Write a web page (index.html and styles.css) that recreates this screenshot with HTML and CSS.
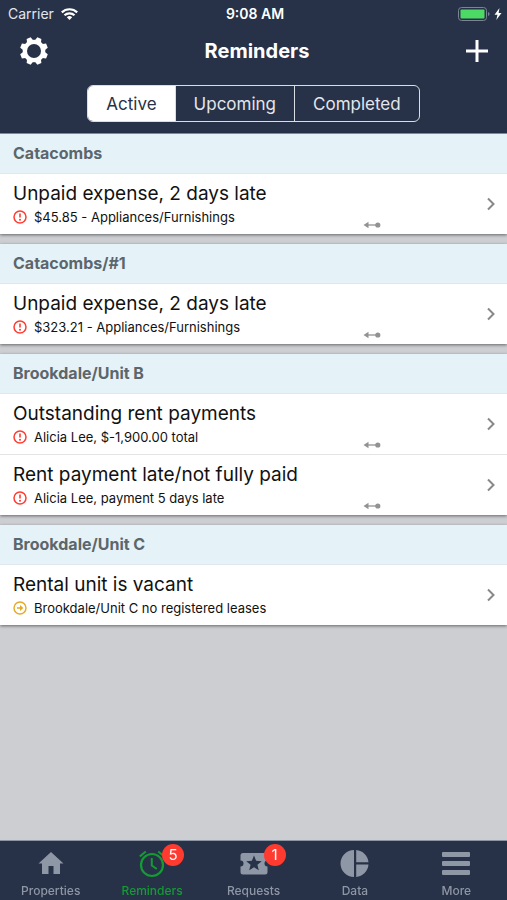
FILE: index.html
```html
<!DOCTYPE html>
<html lang="en">
<head>
    <meta charset="UTF-8">
    <meta name="viewport" content="width=device-width, initial-scale=1.0">
    <title>Reminders</title>
    <link rel="stylesheet" href="styles.css">
</head>
<body>
    <!-- Shared icons -->
    <svg class="icon-defs" aria-hidden="true">
        <symbol id="alert" viewBox="0 0 14 14">
            <circle cx="7" cy="7" r="6" fill="none" stroke="currentColor" stroke-width="1.5"/>
            <path d="M7 3.6v4" stroke="currentColor" stroke-width="1.6"/>
            <circle cx="7" cy="9.7" r="1" fill="currentColor"/>
        </symbol>
        <symbol id="vacant" viewBox="0 0 14 14">
            <circle cx="7" cy="7" r="6" fill="none" stroke="currentColor" stroke-width="1.4"/>
            <path d="M4 6.2h3V4l3.4 3L7 10V7.8H4z" fill="currentColor"/>
        </symbol>
        <symbol id="swipe" viewBox="0 0 18 8">
            <path d="M4 4h11" stroke="currentColor" stroke-width="1.3"/>
            <path d="M0.5 4L5.5 0.8v6.4z" fill="currentColor"/>
            <circle cx="14.8" cy="4" r="2.6" fill="currentColor"/>
        </symbol>
        <symbol id="chevron" viewBox="0 0 8 14">
            <path d="M1 1.5L6.5 7L1 12.5" fill="none" stroke="currentColor" stroke-width="2"/>
        </symbol>
    </svg>

    <header class="header">
        <div class="status-bar">
            <div class="carrier">
                <span>Carrier</span>
                <svg class="wifi" viewBox="0 0 17 12" fill="none" stroke="currentColor" stroke-width="2.2">
                    <path d="M0.8 4.4a11 11 0 0 1 15.4 0"/>
                    <path d="M3.5 7.3a7.2 7.2 0 0 1 10 0"/>
                    <path d="M8.5 12L5.8 9.2a3.9 3.9 0 0 1 5.4 0z" fill="currentColor" stroke="none"/>
                </svg>
            </div>
            <div class="time">9:08 AM</div>
            <div class="power">
                <svg class="battery" viewBox="0 0 32 14">
                    <rect x="0.5" y="0.5" width="28" height="13" rx="3" fill="none" stroke="#7b8494"/>
                    <rect x="2.5" y="2.5" width="24" height="9" rx="1" fill="#4cd964"/>
                    <path d="M30 5v4q1.6-.6 1.6-2t-1.6-2z" fill="#7b8494"/>
                </svg>
                <svg class="bolt" viewBox="0 0 8 12"><path d="M5.5 0L0.5 6.8h3L2.3 12L7.5 4.9H4.6z" fill="currentColor"/></svg>
            </div>
        </div>
        <div class="nav-bar">
            <button class="nav-button" aria-label="Settings">
                <svg class="gear" viewBox="-14 -14 28 28">
                    <g fill="currentColor">
                        <g transform="rotate(22.5)">
                            <path id="tooth" d="M-3.6 -9L-2.2 -14H2.2L3.6 -9V9L2.2 14H-2.2L-3.6 9z"/>
                            <use href="#tooth" transform="rotate(45)"/>
                            <use href="#tooth" transform="rotate(90)"/>
                            <use href="#tooth" transform="rotate(135)"/>
                        </g>
                        <circle r="11.3"/>
                    </g>
                    <circle class="gear-hole" r="7"/>
                </svg>
            </button>
            <h1>Reminders</h1>
            <button class="nav-button" aria-label="Add reminder">
                <svg class="plus" viewBox="0 0 22 22"><path d="M11 0v22M0 11h22" stroke="currentColor" stroke-width="3"/></svg>
            </button>
        </div>
        <div class="segments">
            <button class="segment active">Active</button>
            <button class="segment">Upcoming</button>
            <button class="segment">Completed</button>
        </div>
    </header>

    <main class="list">
        <section class="group">
            <h2>Catacombs</h2>
            <a class="row" href="#">
                <div class="details">
                    <div class="title">Unpaid expense, 2 days late</div>
                    <div class="note"><svg class="note-icon"><use href="#alert"/></svg>$45.85 - Appliances/Furnishings</div>
                </div>
                <svg class="swipe"><use href="#swipe"/></svg>
                <svg class="chevron"><use href="#chevron"/></svg>
            </a>
        </section>

        <section class="group">
            <h2>Catacombs/#1</h2>
            <a class="row" href="#">
                <div class="details">
                    <div class="title">Unpaid expense, 2 days late</div>
                    <div class="note"><svg class="note-icon"><use href="#alert"/></svg>$323.21 - Appliances/Furnishings</div>
                </div>
                <svg class="swipe"><use href="#swipe"/></svg>
                <svg class="chevron"><use href="#chevron"/></svg>
            </a>
        </section>

        <section class="group">
            <h2>Brookdale/Unit B</h2>
            <a class="row" href="#">
                <div class="details">
                    <div class="title">Outstanding rent payments</div>
                    <div class="note"><svg class="note-icon"><use href="#alert"/></svg>Alicia Lee, $-1,900.00 total</div>
                </div>
                <svg class="swipe"><use href="#swipe"/></svg>
                <svg class="chevron"><use href="#chevron"/></svg>
            </a>
            <a class="row" href="#">
                <div class="details">
                    <div class="title">Rent payment late/not fully paid</div>
                    <div class="note"><svg class="note-icon"><use href="#alert"/></svg>Alicia Lee, payment 5 days late</div>
                </div>
                <svg class="swipe"><use href="#swipe"/></svg>
                <svg class="chevron"><use href="#chevron"/></svg>
            </a>
        </section>

        <section class="group">
            <h2>Brookdale/Unit C</h2>
            <a class="row" href="#">
                <div class="details">
                    <div class="title">Rental unit is vacant</div>
                    <div class="note"><svg class="note-icon vacant"><use href="#vacant"/></svg>Brookdale/Unit C no registered leases</div>
                </div>
                <svg class="chevron"><use href="#chevron"/></svg>
            </a>
        </section>
    </main>

    <nav class="tab-bar">
        <a class="tab" href="#">
            <svg class="tab-icon" viewBox="0 0 30 30"><path d="M15 4L2.5 15.5H6V26h6.500v-8h5v8H24V15.5h3.5z" fill="currentColor"/></svg>
            Properties
        </a>
        <a class="tab current" href="#">
            <span class="tab-picture">
                <svg class="tab-icon" viewBox="0 0 30 30" fill="none" stroke="currentColor" stroke-width="2.2">
                    <circle cx="15" cy="17" r="11"/>
                    <path d="M2.8 8.5L8.8 3.5M27.2 8.5L21.2 3.5"/>
                    <path d="M14.8 10v7.5l5 3.5" stroke-width="2"/>
                </svg>
                <span class="badge">5</span>
            </span>
            Reminders
        </a>
        <a class="tab" href="#">
            <span class="tab-picture">
                <svg class="tab-icon" viewBox="0 0 30 30">
                    <path fill="currentColor" fill-rule="evenodd" d="M4 5h22a2.5 2.5 0 0 1 2.5 2.5v5a3 3 0 0 0 0 6V24a2.5 2.5 0 0 1-2.5 2.5H4A2.5 2.5 0 0 1 1.5 24v-5.5a3 3 0 0 0 0-6v-5A2.5 2.5 0 0 1 4 5zM15 7.5l-2.1 5.3-5.7.4 4.4 3.6-1.4 5.5 4.8-3 4.8 3-1.4-5.5 4.4-3.6-5.7-.4z"/>
                </svg>
                <span class="badge">1</span>
            </span>
            Requests
        </a>
        <a class="tab" href="#">
            <svg class="tab-icon" viewBox="0 0 30 30" fill="currentColor">
                <path d="M14 2v27A13.5 13.5 0 0 1 14 2zM16.2 2A13.5 13.5 0 0 1 28.5 14.3H16.2zM16.2 16.6h12.3A13.5 13.5 0 0 1 16.2 29z"/>
            </svg>
            Data
        </a>
        <a class="tab" href="#">
            <svg class="tab-icon" viewBox="0 0 30 30" fill="currentColor">
                <rect x="1" y="4" width="28" height="5" rx="1"/>
                <rect x="1" y="13" width="28" height="5" rx="1"/>
                <rect x="1" y="22" width="28" height="5" rx="1"/>
            </svg>
            More
        </a>
    </nav>
</body>
</html>
```
FILE: styles.css
```css
:root {
    --bar-color: #273147;
    --page-color: #cdced2;
    --group-color: #e5f2f8;
    --tab-color: #8e97a6;
    --current-color: #159a35;
    --alert-color: #ff3b30;
}
* {
    box-sizing: border-box;
}
body {
    font-family: Inter, Roboto, sans-serif;
    display: flex;
    flex-direction: column;
    min-height: 100vh;
    margin: 0;
    background-color: var(--page-color);
    color: #111;
}
a {
    color: inherit;
    text-decoration: none;
}
button {
    font-family: inherit;
    background: none;
    border: none;
    color: white;
    cursor: pointer;
}
svg {
    display: block;
    flex: none;
}
.icon-defs {
    position: absolute;
    width: 0;
    height: 0;
}

/* Header */
.header {
    background-color: var(--bar-color);
    color: white;
    padding-bottom: 11px;
    border-bottom: 1px solid #8b95a3;
}
.status-bar {
    display: grid;
    grid-template-columns: 1fr auto 1fr;
    align-items: center;
    height: 27px;
    padding: 0 5px 0 8px;
    font-size: 14px;
}
.carrier, .power {
    display: flex;
    align-items: center;
    gap: 7px;
    color: #e3e6ec;
}
.wifi {
    width: 17px;
    height: 12px;
    color: white;
}
.time {
    font-weight: 600;
}
.power {
    justify-content: flex-end;
    gap: 4px;
    color: white;
}
.battery {
    width: 32px;
    height: 14px;
}
.bolt {
    width: 8px;
    height: 12px;
}
.nav-bar {
    display: flex;
    align-items: center;
    justify-content: space-between;
    height: 47px;
    padding: 0 19px 0 20px;
}
.nav-button {
    padding: 0;
}
.gear {
    width: 28px;
    height: 28px;
}
.gear-hole {
    fill: var(--bar-color);
}
.plus {
    width: 22px;
    height: 22px;
}
h1 {
    margin: 0;
    font-size: 20px;
    font-weight: 700;
}
.segments {
    display: flex;
    width: fit-content;
    margin: 11px auto 0;
    border: 1px solid #d9dde4;
    border-radius: 6px;
    overflow: hidden;
}
.segment {
    height: 35px;
    padding: 0 18px;
    font-size: 17px;
    color: #e3e6ec;
}
.segment + .segment {
    border-left: 1px solid #d9dde4;
}
.segment.active {
    background-color: white;
    color: var(--bar-color);
}

/* Reminder list */
.list {
    flex: 1;
}
.group {
    margin-bottom: 10px;
    background-color: white;
    box-shadow: 0 1px 3px rgba(0, 0, 0, 0.5);
}
h2 {
    margin: 0;
    padding: 0 13px;
    background-color: var(--group-color);
    border-bottom: 1px solid #dfe8ec;
    color: #5c666b;
    font-size: 16px;
    line-height: 39px;
    font-weight: 700;
}
.row {
    display: flex;
    align-items: center;
    height: 60px;
    padding: 0 12px 0 13px;
}
.row + .row {
    height: 61px;
    border-top: 1px solid #e4e4e6;
}
.details {
    flex: 1;
}
.title {
    font-size: 19px;
    line-height: 26px;
}
.note {
    display: flex;
    align-items: center;
    gap: 7px;
    font-size: 13px;
    line-height: 20px;
}
.note-icon {
    width: 14px;
    height: 14px;
    color: var(--alert-color);
}
.note-icon.vacant {
    color: #e3aa26;
}
.swipe {
    align-self: flex-end;
    width: 18px;
    height: 8px;
    margin: 0 106px 5px 0;
    color: #929294;
}
.chevron {
    width: 8px;
    height: 14px;
    color: #88888a;
}

/* Bottom tabs */
.tab-bar {
    position: sticky;
    bottom: 0;
    display: flex;
    height: 60px;
    background-color: var(--bar-color);
    border-top: 1px solid #8b95a3;
}
.tab {
    flex: 1;
    display: flex;
    flex-direction: column;
    align-items: center;
    padding-top: 7px;
    color: var(--tab-color);
    font-size: 12px;
    font-weight: 500;
    line-height: 26px;
}
.tab.current {
    color: var(--current-color);
}
.tab-picture {
    position: relative;
}
.tab-icon {
    width: 30px;
    height: 30px;
}
.badge {
    position: absolute;
    top: -4px;
    left: 25px;
    width: 22px;
    height: 22px;
    border-radius: 50%;
    background-color: var(--alert-color);
    color: white;
    font-size: 15px;
    font-weight: 400;
    line-height: 22px;
    text-align: center;
}
```
